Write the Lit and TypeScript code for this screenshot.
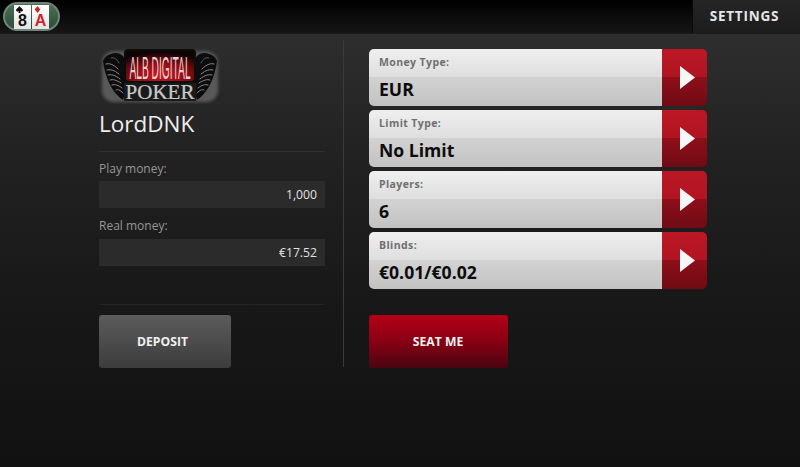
import { LitElement, html, css, svg } from "lit";
import { customElement } from "lit/decorators.js";

const wing = svg`
  <path d="M12 8 C19 5 25 9 27 15 L27 44 L24 54 C14 48 6 32 4 15 C5 12 8 9 12 8 Z" fill="#0c0c0c" />
  <g fill="none" stroke="#8a8a8a" stroke-width="1" stroke-linecap="round">
    <path d="M7 18 C10 17 14 18 19 23" />
    <path d="M8 24 C11 23 15 24 20 28" />
    <path d="M9 29 C12 28 16 29 21 33" />
    <path d="M11 34 C14 33 17 34 22 37" />
    <path d="M13 39 C16 38 19 39 23 42" />
    <path d="M17 44 C19 43 21 44 24 47" />
    <path d="M12 12 C15 11 18 13 20 17" stroke="#5a5a5a" />
  </g>`;

@customElement("app-root")
export class AppRoot extends LitElement {
  static styles = css`
    :host {
      display: block;
      width: 800px;
      height: 467px;
      overflow: hidden;
      font-family: "Open Sans", "Noto Sans", sans-serif;
      background: linear-gradient(#2e2e2e 34px, #222 150px, #181818 300px, #111 467px);
    }
    .top {
      height: 33px;
      display: flex;
      align-items: stretch;
      justify-content: space-between;
      background: linear-gradient(#000, #161616);
      border-bottom: 1px solid #1c1c1c;
    }
    .pill {
      display: flex;
      align-self: flex-start;
      gap: 1px;
      margin: 2px 0 0 3px;
      width: 57px;
      height: 29px;
      box-sizing: border-box;
      justify-content: center;
      align-items: center;
      border-radius: 15px;
      border: 2px solid #6f8577;
      background: linear-gradient(#4d7057, #2c4a37);
    }
    .card {
      width: 17px;
      height: 24px;
      background: linear-gradient(#fff, #e4e4e4);
      position: relative;
      text-align: center;
      font-family: "Liberation Sans", sans-serif;
      font-size: 16px;
      font-weight: 700;
      line-height: 15px;
      padding-top: 8px;
      box-sizing: border-box;
      color: #111;
    }
    .card.red { color: #d0242c; }
    .suit {
      position: absolute;
      left: 2px;
      top: 1px;
      width: 7px;
      height: 7px;
      display: block;
    }
    .settings {
      width: 108px;
      display: flex;
      align-items: center;
      justify-content: center;
      border-left: 1px solid #0a0a0a;
      background: linear-gradient(#262626, #1c1c1c);
      color: #e6e6e6;
      font-weight: 700;
      font-size: 13.5px;
      letter-spacing: 0.8px;
      padding: 0 4px 2px 0;
      box-sizing: border-box;
    }
    .main {
      display: flex;
      padding: 6px 0 0 99px;
    }
    .left {
      width: 226px;
      padding-top: 6px;
      box-sizing: border-box;
      display: flex;
      flex-direction: column;
    }
    .logo { display: block; width: 122px; height: 58px; flex: none; }
    .name {
      margin-top: 4px;
      color: #eee;
      font-size: 22.5px;
      line-height: 31px;
      height: 31px;
    }
    .rule {
      height: 1px;
      background: #2f2f2f;
      margin-top: 12px;
      flex: none;
    }
    .lab {
      color: #969696;
      font-size: 12px;
      line-height: 16px;
      margin-top: 9px;
      font-weight: 500;
    }
    .lab.second { margin-top: 10px; }
    .val {
      margin-top: 4px;
      height: 27px;
      background: #2b2b2b;
      color: #e2e2e2;
      font-size: 12.2px;
      font-weight: 500;
      line-height: 27px;
      text-align: right;
      padding-right: 8px;
    }
    .lab.second + .val { margin-top: 5px; }
    .rule.low { background: #232323; margin-top: 38px; }
    .btn {
      display: flex;
      align-items: center;
      justify-content: center;
      height: 53px;
      flex: none;
      border-radius: 3px;
      color: #f0f0f0;
      font-weight: 700;
      font-size: 12.2px;
    }
    .deposit {
      width: 132px;
      margin-top: 10px;
      padding-right: 5px;
      box-sizing: border-box;
      background: linear-gradient(#5c5c5c, #3c3c3c);
    }
    .seat {
      width: 139px;
      margin-top: 26px;
      padding-right: 1px;
      box-sizing: border-box;
      background: linear-gradient(#b30018, #8e0014 45%, #4a0510);
    }
    .divider {
      width: 1px;
      height: 327px;
      background: #3a3a3a;
      margin-left: 18px;
      flex: none;
    }
    .right {
      margin-left: 25px;
      width: 338px;
      padding-top: 9px;
    }
    .rows { display: flex; flex-direction: column; gap: 4px; }
    .row {
      display: flex;
      height: 57px;
      border-radius: 5px;
      overflow: hidden;
    }
    .field {
      flex: 1;
      padding-left: 10px;
      background: linear-gradient(#efefef, #dedede 49%, #d2d2d2 50%, #c2c2c2);
    }
    .fl {
      color: #6f6f6f;
      font-weight: 700;
      font-size: 10.5px;
      letter-spacing: 0.4px;
      line-height: 14px;
      margin-top: 6px;
    }
    .fv {
      color: #0c0c0c;
      font-weight: 700;
      font-size: 17.6px;
      line-height: 24px;
      margin-top: 8px;
    }
    .arrow {
      width: 45px;
      display: flex;
      align-items: center;
      justify-content: center;
      padding-left: 6px;
      box-sizing: border-box;
      background: linear-gradient(#bd1725, #b01522 49%, #8e0f1a 50%, #6f0b14);
    }
    .arrow svg { display: block; width: 15px; height: 23px; }
  `;

  render() {
    const rows = [
      ["Money Type:", "EUR"],
      ["Limit Type:", "No Limit"],
      ["Players:", "6"],
      ["Blinds:", "€0.01/€0.02"],
    ];
    return html`
      <div class="top">
        <div class="pill">
          <div class="card">
            <svg class="suit" viewBox="0 0 10 10">
              <path d="M5 0 C6.5 2.5 10 3.8 10 6.2 C10 8 7.4 8.4 5.8 7 L6.8 10 H3.2 L4.2 7 C2.6 8.4 0 8 0 6.2 C0 3.8 3.5 2.5 5 0 Z" fill="#111" />
            </svg>
            8
          </div>
          <div class="card red">
            <svg class="suit" viewBox="0 0 10 10"><path d="M5 0 L9 5 L5 10 L1 5 Z" fill="#d0242c" /></svg>
            A
          </div>
        </div>
        <div class="settings">SETTINGS</div>
      </div>
      <div class="main">
        <div class="left">
          <svg class="logo" viewBox="0 0 122 58">
            <defs>
              <radialGradient id="lg" cx="0.5" cy="0.8" r="0.75">
                <stop offset="0" stop-color="#d01820" />
                <stop offset="0.55" stop-color="#8a0d14" />
                <stop offset="1" stop-color="#100304" />
              </radialGradient>
              <filter id="bl" x="-10%" y="-10%" width="120%" height="120%">
                <feGaussianBlur stdDeviation="1.6" />
              </filter>
            </defs>
            <rect x="3" y="5" width="116" height="51" rx="12" fill="#595959" filter="url(#bl)" />
            ${wing}
            <g transform="translate(122 0) scale(-1 1)">${wing}</g>
            <rect x="25" y="3" width="72" height="35" rx="4" fill="#0c0c0c" />
            <rect x="27" y="5" width="68" height="30" rx="3" fill="url(#lg)" />
            <text transform="translate(61 33) scale(0.33 1)" text-anchor="middle"
              font-family="Liberation Sans" font-size="31" fill="#e6d0d0">ALB DIGITAL</text>
            <rect x="25" y="37" width="72" height="18" fill="#1a1a1a" />
            <text x="61" y="53" text-anchor="middle"
              font-family="Liberation Serif" font-size="21" fill="#c4c4c4" stroke="#e8e8e8" stroke-width="0.2">POKER</text>
          </svg>
          <div class="name">LordDNK</div>
          <div class="rule"></div>
          <div class="lab">Play money:</div>
          <div class="val">1,000</div>
          <div class="lab second">Real money:</div>
          <div class="val">€17.52</div>
          <div class="rule low"></div>
          <div class="btn deposit">DEPOSIT</div>
        </div>
        <div class="divider"></div>
        <div class="right">
          <div class="rows">
            ${rows.map(
              ([l, v]) => html`
                <div class="row">
                  <div class="field">
                    <div class="fl">${l}</div>
                    <div class="fv">${v}</div>
                  </div>
                  <div class="arrow">
                    <svg viewBox="0 0 15 23"><path d="M0 0 L15 11.5 L0 23 Z" fill="#f6f6f6" /></svg>
                  </div>
                </div>
              `
            )}
          </div>
          <div class="btn seat">SEAT ME</div>
        </div>
      </div>
    `;
  }
}
